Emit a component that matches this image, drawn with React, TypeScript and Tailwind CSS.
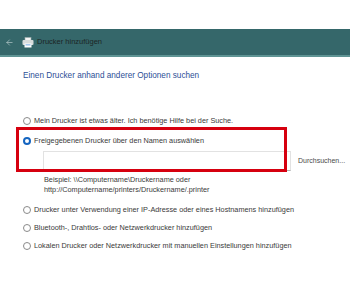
import { ArrowLeft } from "lucide-react"

function Radio({ checked }: { checked?: boolean }) {
    return (
        <span
            className={
                checked
                    ? "w-[8px] h-[8px] rounded-full border-[2px] border-[#1565c0] bg-white shrink-0"
                    : "w-[8px] h-[8px] rounded-full border border-[#8a8a8a] bg-white shrink-0"
            }
        />
    )
}

function Option({ label, checked }: { label: string; checked?: boolean }) {
    return (
        <label className="flex items-center gap-[3px] h-[10px] text-[7.3px] leading-[10px] text-[#3a3a3a]">
            <Radio checked={checked} />
            <span>{label}</span>
        </label>
    )
}

function PrinterIcon() {
    return (
        <svg width="12" height="11" viewBox="0 0 12 11">
            <rect x="3" y="0.5" width="6" height="3" fill="#f4f4f4" stroke="#9aa" strokeWidth="0.6" />
            <rect x="0.5" y="3" width="11" height="5" rx="1" fill="#d8dcdc" />
            <rect x="2.5" y="6.5" width="7" height="4" fill="#ffffff" />
            <rect x="3.5" y="7.5" width="5" height="0.8" fill="#4a90d9" />
        </svg>
    )
}

export default function App() {
    return (
        <div className="relative w-[350px] h-[300px] bg-white overflow-hidden font-['Liberation_Sans',Arial,sans-serif]">
            <div className="h-[29px]" />
            <div className="flex items-center h-[28px] bg-[#35676a] border-b-[2px] border-[#5f9494] pl-[5px]">
                <ArrowLeft size={9} strokeWidth={1.6} className="text-[#c8d6d6]" />
                <div className="ml-[8px] flex items-center gap-[3px]">
                    <PrinterIcon />
                    <span className="text-[7.5px] text-[#1c2626]">Drucker hinzufügen</span>
                </div>
            </div>

            <div className="pl-[23px] pt-[13px]">
                <h1 className="text-[8.2px] leading-[11px] text-[#2d4f96]">Einen Drucker anhand anderer Optionen suchen</h1>

                <div className="mt-[35px] flex flex-col">
                    <Option label="Mein Drucker ist etwas älter. Ich benötige Hilfe bei der Suche." />
                    <div className="mt-[10px]">
                        <Option label="Freigegebenen Drucker über den Namen auswählen" checked />
                    </div>
                    <div className="flex items-center mt-[5px] ml-[20px]">
                        <div className="w-[248px] h-[20px] border border-[#e2e2e2] border-b-[#b0b0b0]" />
                        <span className="ml-[7px] text-[7px] text-[#4a4a4a]">Durchsuchen...</span>
                    </div>
                    <div className="ml-[21px] mt-[4px] text-[7.3px] leading-[10px] text-[#3a3a3a]">
                        <p>Beispiel: \\Computername\Druckername oder</p>
                        <p>http://Computername/printers/Druckername/.printer</p>
                    </div>
                    <div className="mt-[10px] flex flex-col gap-[8px]">
                        <Option label="Drucker unter Verwendung einer IP-Adresse oder eines Hostnamens hinzufügen" />
                        <Option label="Bluetooth-, Drahtlos- oder Netzwerkdrucker hinzufügen" />
                        <Option label="Lokalen Drucker oder Netzwerkdrucker mit manuellen Einstellungen hinzufügen" />
                    </div>
                </div>
            </div>

            <div className="absolute left-[16px] top-[127px] w-[271px] h-[45px] border-[3px] border-[#d6000f]" />
        </div>
    )
}
